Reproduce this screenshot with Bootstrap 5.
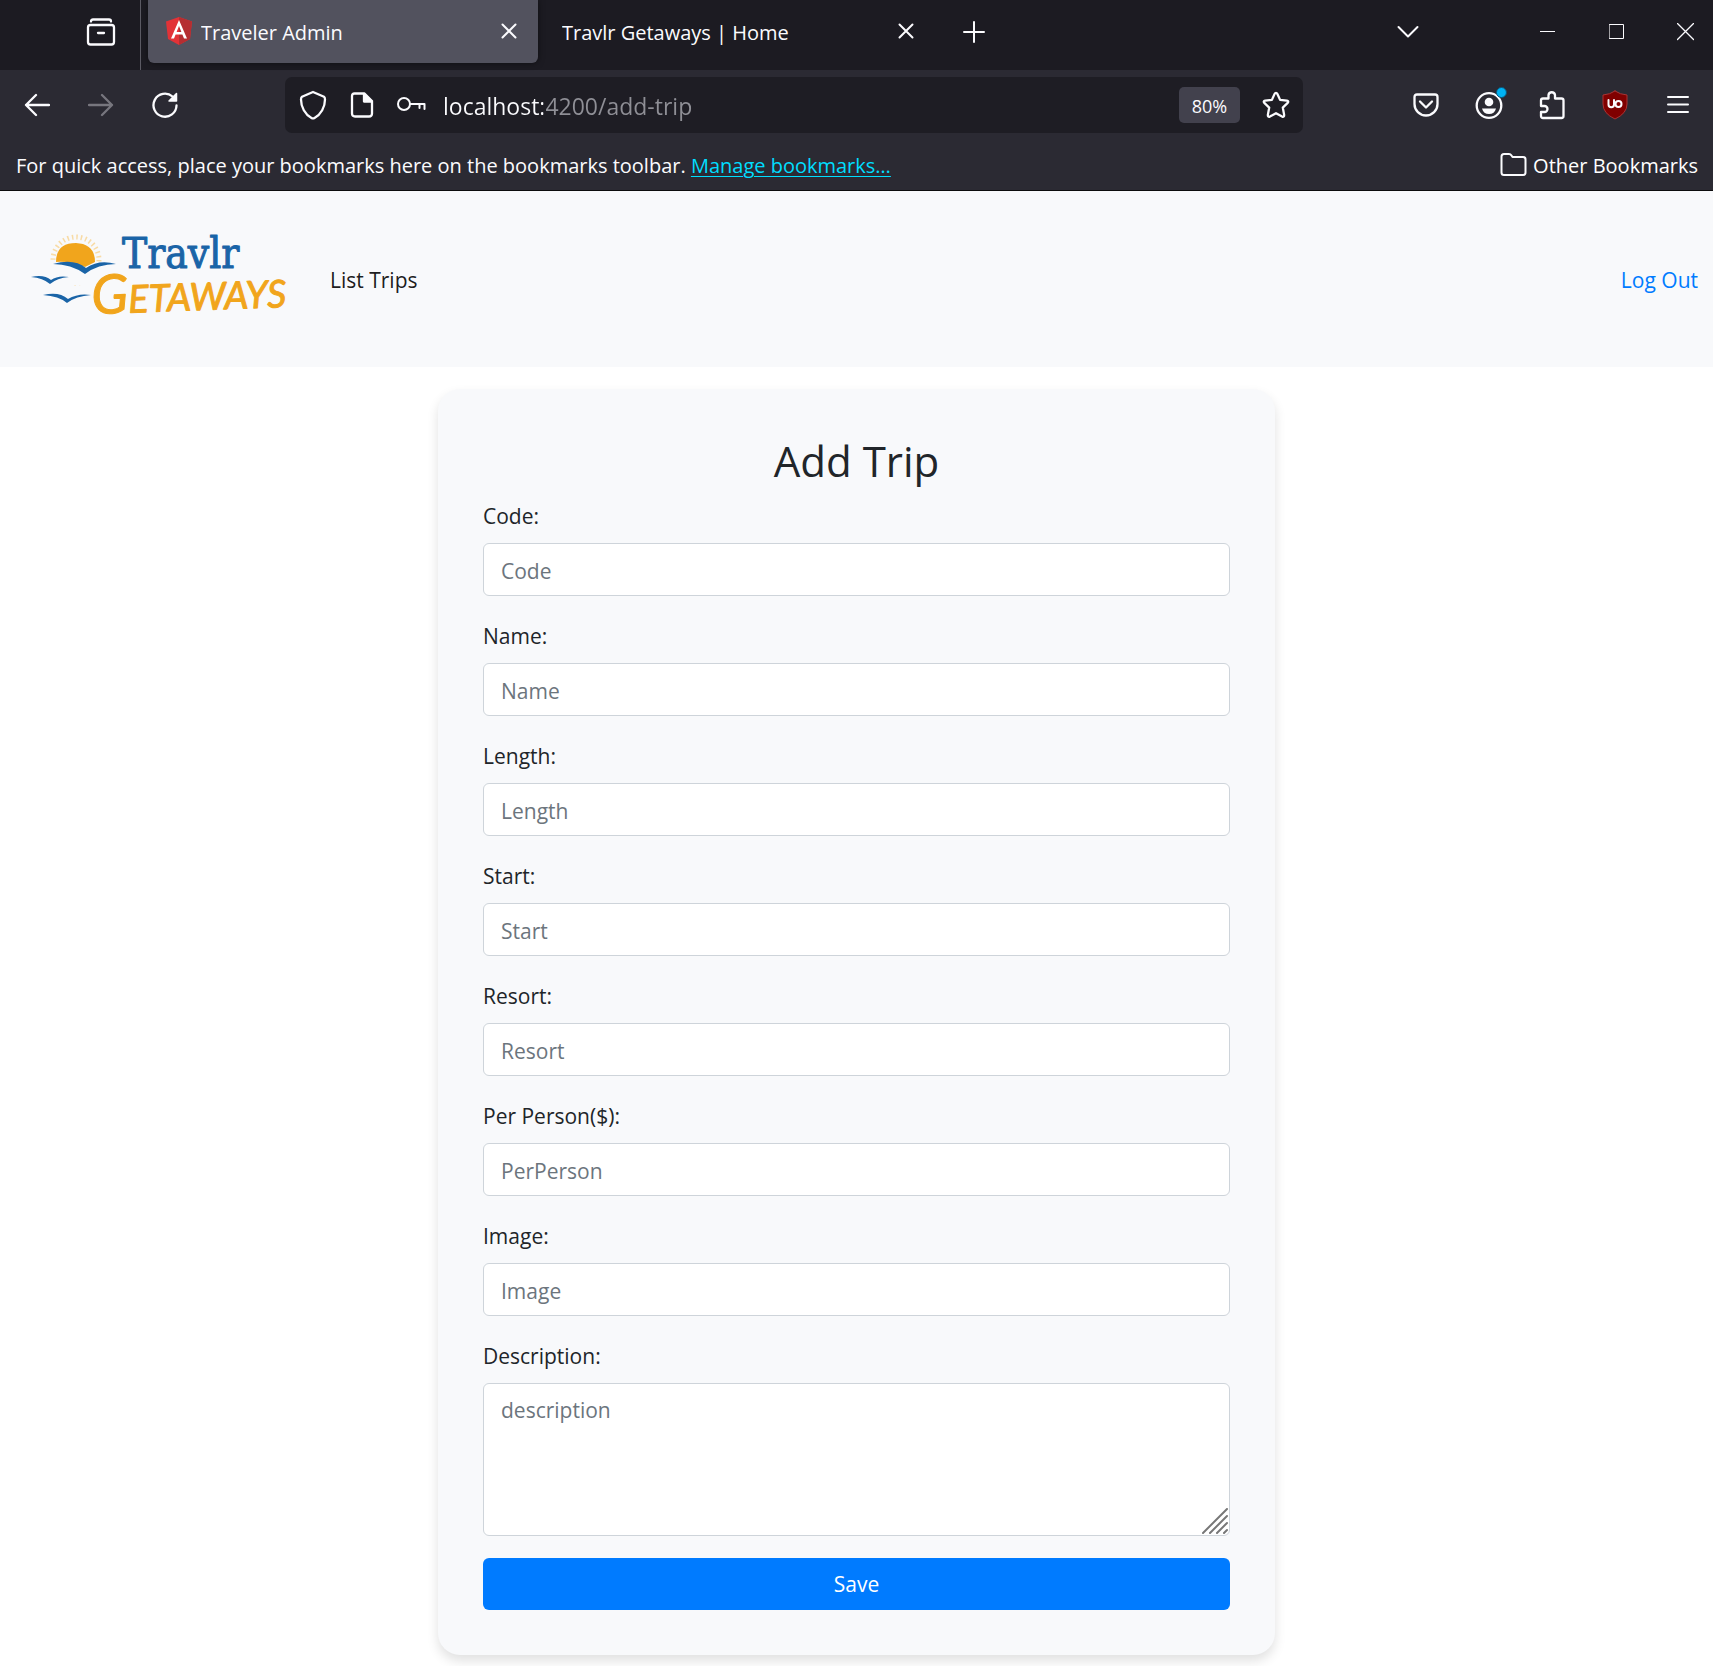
<!DOCTYPE html>
<html lang="en">
<head>
<meta charset="utf-8">
<meta name="viewport" content="width=device-width, initial-scale=1">
<title>Traveler Admin</title>
<link href="https://cdn.jsdelivr.net/npm/bootstrap@5.3.0/dist/css/bootstrap.min.css" rel="stylesheet">
<style>
  body { font-family: "Open Sans", "Noto Sans", sans-serif; font-size: 21px; line-height: 34px; color: #212529; background: #fff; }
  svg { display: block; flex: none; fill: none; stroke: #fbfbfe; stroke-width: 2; stroke-linecap: round; stroke-linejoin: round; }
  .stroke-thin { stroke-width: 1; }
  .stroke-bold { stroke-width: 2.3; }
  .stroke-dim { stroke: #77767e; }
  .tabstrip { height: 70px; background: #1c1b22; color: #fbfbfe; font-size: 20px; }
  .toolrow { height: 70px; background: #2b2a33; padding: 0 4px 0 5px; }
  .markrow { height: 51px; background: #2b2a33; color: #fbfbfe; border-bottom: 1px solid #0c0c0d; padding: 2px 15px 0 16px; font-size: 20px; }
  .markrow .manage { color: #00ddff; text-decoration: underline; text-underline-offset: 3px; text-decoration-thickness: 1px; }
  .other-marks { gap: 6px; font-size: 20px; line-height: 34px; }
  .icon-btn { display: flex; align-items: center; justify-content: center; width: 64px; height: 56px; padding: 0; border: 0; background: none; flex: none; }
  .icon-btn.slim { width: 49px; }
  .icon-btn.win { width: 55px; }
  .toolgroup .icon-btn { width: 63px; }
  .window-btns { gap: 14px; margin-left: 80px; }
  .archive-cell { width: 141px; height: 70px; padding: 0 0 6px 61px; border-right: 1px solid #5b5a63; margin-right: 7px; }
  .archive-cell .icon-btn { width: 80px; }
  .tab-item { width: 390px; height: 63px; padding: 0 8px 2px 17px; margin-right: 7px; }
  .tab-item.current { background: #52525e; border-radius: 0 0 6px 6px; box-shadow: 0 0 6px rgba(0,0,0,.5); }
  .tab-item .icon-btn { width: 43px; height: 44px; }
  .tab-name { padding-top: 4px; }
  .addressbar { height: 56px; margin: 0 91px 0 88px; padding: 0 3px; background: #1e1d24; border-radius: 7px; }
  .address-input { min-width: 0; height: 50px; padding: 2px 0 0; margin-left: 8px; border: 0; outline: 0; font-size: 23px;
    background: linear-gradient(to right, #fbfbfe 100px, #8f8f96 100px); -webkit-background-clip: text; background-clip: text; color: transparent; }
  .zoom-btn { width: 61px; height: 36px; margin-right: 11px; padding: 0; border: 0; border-radius: 5px; background: #42414d; color: #fbfbfe; font-size: 18px; line-height: 38px; }
  .site-header { height: 176px; padding: 0 15px 0 24px; background: #f8f9fb; }
  .site-header a { text-decoration: none; padding-top: 2px; }
  .site-header .brand-link { padding-top: 0; }
  .site-link { color: rgba(0,0,0,.9); margin-left: 38px; }
  .logout-link { color: #007bff; }
  .trip-card { max-width: 837px; margin: 22px auto 11px; padding: 45px; border-radius: 22px; background: #f8f9fb; box-shadow: 0 6px 12px rgba(0,0,0,.12); }
  .trip-title { font-size: 42px; line-height: 54px; margin-bottom: 11px; font-weight: 400; }
  .trip-field { margin-bottom: 23px; }
  .trip-field .form-label { display: block; margin-bottom: 10px; }
  .trip-field .form-control { height: 53px; padding: 9px 17px 7px; border: 1px solid #ced4da; border-radius: 6px; font-size: 21px; line-height: 34px; background: #fff; }
  .trip-field .form-control::placeholder { color: #6c757d; opacity: 1; }
  .trip-field.last { margin-bottom: 22px; }
  .trip-field textarea.form-control { height: 153px; resize: none; }
  .grip { position: absolute; right: 2px; bottom: 2px; stroke: #777; }
  .save-btn { height: 52px; padding: 2px 0 0; border: 0; border-radius: 6px; background: #007bff; color: #fff; font-size: 21px; }
</style>
</head>
<body>
<div class="tabstrip d-flex align-items-start">
  <div class="archive-cell d-flex align-items-center">
    <button class="icon-btn" type="button" aria-label="Recent browsing">
      <svg class="stroke-bold" width="30" height="30" viewBox="0 0 30 30"><path d="M5 4.500C5 3 6 2.500 7 2.500H23C24 2.500 25 3 25 4.500"/><rect x="2" y="8" width="26" height="19.500" rx="2.500"/><path d="M12 16H18"/></svg>
    </button>
  </div>
  <div class="tab-item current d-flex align-items-center">
    <svg width="28" height="30" viewBox="0 0 28 30"><path fill="#e23237" stroke="none" d="M14 1L27 5.500L25 23L14 29L3 23L1 5.500Z"/><path fill="#b52e31" stroke="none" d="M14 1L27 5.500L25 23L14 29Z"/><path fill="#fff" stroke="none" fill-rule="evenodd" d="M14 4L22 22.500H19L17.400 18.500H10.600L9 22.500H6ZM14 10L11.600 16H16.400Z"/></svg>
    <span class="tab-name flex-grow-1 ms-2 text-truncate">Traveler Admin</span>
    <button class="icon-btn" type="button" aria-label="Close tab"><svg width="16" height="16" viewBox="0 0 16 16"><path d="M1.500 1.500L14.500 14.500M14.500 1.500L1.500 14.500"/></svg></button>
  </div>
  <div class="tab-item d-flex align-items-center">
    <span class="tab-name flex-grow-1 text-truncate">Travlr Getaways | Home</span>
    <button class="icon-btn" type="button" aria-label="Close tab"><svg width="16" height="16" viewBox="0 0 16 16"><path d="M1.500 1.500L14.500 14.500M14.500 1.500L1.500 14.500"/></svg></button>
  </div>
  <div class="d-flex align-items-center flex-grow-1 pt-1">
    <button class="icon-btn" type="button" aria-label="New tab"><svg width="22" height="22" viewBox="0 0 22 22"><path d="M11 1V21M1 11H21"/></svg></button>
    <button class="icon-btn ms-auto" type="button" aria-label="List all tabs"><svg width="22" height="14" viewBox="0 0 22 14"><path d="M1.500 2L11 11.500L20.500 2"/></svg></button>
  </div>
  <div class="window-btns d-flex pt-1">
    <button class="icon-btn win" type="button" aria-label="Minimize"><svg class="stroke-thin" width="15" height="16" viewBox="0 0 15 16"><path d="M0 7.500H15"/></svg></button>
    <button class="icon-btn win" type="button" aria-label="Maximize"><svg class="stroke-thin" width="15" height="16" viewBox="0 0 15 16"><rect x=".5" y=".5" width="14" height="14"/></svg></button>
    <button class="icon-btn win" type="button" aria-label="Close window"><svg class="stroke-thin" width="17" height="18" viewBox="0 0 17 18"><path d="M.5 .5L16.500 16.500M16.500 .5L.5 16.500" stroke-width="1.300"/></svg></button>
  </div>
</div>

<div class="toolrow d-flex align-items-center">
  <button class="icon-btn" type="button" aria-label="Back"><svg class="stroke-bold" width="26" height="24" viewBox="0 0 26 24"><path d="M12 2L2 12L12 22M2 12H25"/></svg></button>
  <button class="icon-btn" type="button" aria-label="Forward"><svg class="stroke-bold stroke-dim" width="26" height="24" viewBox="0 0 26 24"><path d="M14 2L24 12L14 22M24 12H1"/></svg></button>
  <button class="icon-btn" type="button" aria-label="Reload"><svg class="stroke-bold" width="26" height="26" viewBox="0 0 26 26"><path d="M24.500 13.500A11.500 11.500 0 1 1 20.500 4.500"/><path d="M24.500 1.500V9H17Z" fill="#fbfbfe" stroke-width="1.500"/></svg></button>
  <div class="addressbar d-flex align-items-center flex-grow-1">
    <button class="icon-btn slim" type="button" aria-label="Tracking protection"><svg class="stroke-bold" width="28" height="30" viewBox="0 0 28 30"><path d="M14 2L25 6.800C26 7.500 26 8.500 26 9.500C26 17 22 24.500 15.500 28Q14 28.800 12.500 28C6 24.500 2 17 2 9.500C2 8.500 2 7.500 3 6.800Z"/></svg></button>
    <button class="icon-btn slim" type="button" aria-label="Site information"><svg class="stroke-bold" width="24" height="26" viewBox="0 0 24 26"><path d="M4.500 1.500H14.500L22 9V21.500Q22 24.500 19 24.500H5Q2 24.500 2 21.500V4Q2 1.500 4.500 1.500Z"/><path d="M14 2V9.500H21.500Z" fill="#fbfbfe"/></svg></button>
    <button class="icon-btn slim" type="button" aria-label="Saved logins"><svg width="30" height="18" viewBox="0 0 30 18"><circle cx="8" cy="8" r="6"/><path d="M14 8H28.500V13M23.500 8V12"/></svg></button>
    <input class="address-input flex-grow-1" type="text" aria-label="Address" value="localhost:4200/add-trip">
    <button class="zoom-btn" type="button">80%</button>
    <button class="icon-btn slim" type="button" aria-label="Bookmark this page"><svg class="stroke-bold" width="28" height="28" viewBox="0 0 28 28"><path d="M14 1.800Q14.900 1.800 15.400 2.900L18.100 8.900L24.900 9.700Q27 10.200 25.700 11.900L20.800 16.600L22.100 23.600Q22.400 26.300 20.100 25.600L14 22.200L7.900 25.600Q5.600 26.300 5.900 23.600L7.200 16.600L2.300 11.900Q1 10.200 3.100 9.700L9.900 8.900L12.600 2.900Q13.100 1.800 14 1.800Z"/></svg></button>
  </div>
  <div class="toolgroup d-flex">
    <button class="icon-btn" type="button" aria-label="Save to Pocket"><svg class="stroke-bold" width="26" height="24" viewBox="0 0 26 24"><path d="M4 1.500H22Q24.500 1.500 24.500 4V11A11.500 11.500 0 0 1 1.500 11V4Q1.500 1.500 4 1.500Z"/><path d="M7 8.500L13 14.500L19 8.500"/></svg></button>
    <button class="icon-btn" type="button" aria-label="Account"><svg class="stroke-bold" width="36" height="36" viewBox="0 0 36 36"><circle cx="18" cy="18.500" r="12.300"/><circle cx="18" cy="15" r="4.300" fill="#fbfbfe" stroke="none"/><path d="M11 21.500H25Q23.500 27 18 27T11 21.500Z" fill="#fbfbfe" stroke="none"/><circle cx="30.500" cy="5.500" r="5" fill="#00b3f4" stroke="#0b5577" stroke-width="1"/></svg></button>
    <button class="icon-btn" type="button" aria-label="Extensions"><svg class="stroke-bold" width="26" height="30" viewBox="0 0 26 30"><path d="M2 16V10.500Q2 8.500 4 8.500H9.500V5A3.300 3.300 0 0 1 16 5V8.500H22.500Q24.500 8.500 24.500 10.500V26Q24.500 28 22.500 28H4Q2 28 2 26V22H5.500A3 3 0 0 0 5.500 16Z"/></svg></button>
    <button class="icon-btn" type="button" aria-label="uBlock Origin"><svg width="26" height="30" viewBox="0 0 26 30"><path d="M13 1Q18 4.500 25 5V14Q25 23.500 13 29Q1 23.500 1 14V5Q8 4.500 13 1Z" fill="#800000" stroke="#a33" stroke-width="1"/><path d="M6.500 10V14.500A2.500 2.500 0 0 0 12 14.500V10"/><circle cx="16.500" cy="14" r="3"/></svg></button>
    <button class="icon-btn" type="button" aria-label="Menu"><svg width="22" height="20" viewBox="0 0 22 20"><path d="M1 2H21M1 9.500H21M1 17H21"/></svg></button>
  </div>
</div>

<div class="markrow d-flex align-items-center justify-content-between">
  <div>For quick access, place your bookmarks here on the bookmarks toolbar. <a class="manage" href="#">Manage bookmarks…</a></div>
  <button class="other-marks btn p-0 border-0 d-flex align-items-center text-white rounded-0" type="button">
    <svg width="27" height="28" viewBox="0 0 27 28"><path d="M4 2H9Q10.500 2 11.500 3.500L12.500 5H23Q25.500 5 25.500 7.500V20.500Q25.500 23 23 23H4Q1.500 23 1.500 20.500V4.500Q1.500 2 4 2Z"/></svg>
    Other Bookmarks
  </button>
</div>

<header class="site-header d-flex align-items-center">
  <a class="brand-link" href="#" aria-label="Travlr Getaways">
    <svg width="268" height="100" viewBox="24 229 268 100">
      <circle cx="76" cy="260" r="23" stroke="#f8dba5" stroke-width="5" stroke-dasharray="1.500 3" stroke-linecap="butt"/>
      <path d="M50 262H102V285H50Z" fill="#f8f9fb" stroke="none"/>
      <path d="M56 262Q56 243 76 243Q95 244 95 262L85 267Q72 261 56 262Z" fill="#f1a51c" stroke="none"/>
      <path d="M53 264Q74 258 86 268Q99 259 116 264Q98 264 85 274Q71 264 53 264Z" fill="#1a64a7" stroke="none"/>
      <path d="M31 277Q44 274 51 280Q58 275 69 277Q57 278 50 284Q43 278 31 277Z" fill="#1a64a7" stroke="none"/>
      <path d="M43 295Q59 291 68 299Q78 293 91 295Q76 296 67 303Q59 296 43 295Z" fill="#1a64a7" stroke="none"/>
      <text x="122" y="268" font-family="DejaVu Serif Condensed, DejaVu Serif, serif" font-size="42" fill="#1a64a7" stroke="#1a64a7" stroke-width="1">Travlr</text>
      <text x="92" y="314" transform="rotate(-2 92 314)" font-family="Lato, sans-serif" font-style="italic" font-weight="400" font-size="54" fill="#f1a51c" stroke="#f1a51c" stroke-width="1">G<tspan font-size="38">ETAWAYS</tspan></text>
    </svg>
  </a>
  <a class="site-link" href="#">List Trips</a>
  <a class="logout-link ms-auto" href="#">Log Out</a>
</header>

<main>
  <form class="trip-card">
    <h2 class="trip-title text-center">Add Trip</h2>
    <div class="trip-field"><label class="form-label" for="code">Code:</label><input class="form-control" id="code" type="text" placeholder="Code"></div>
    <div class="trip-field"><label class="form-label" for="name">Name:</label><input class="form-control" id="name" type="text" placeholder="Name"></div>
    <div class="trip-field"><label class="form-label" for="length">Length:</label><input class="form-control" id="length" type="text" placeholder="Length"></div>
    <div class="trip-field"><label class="form-label" for="start">Start:</label><input class="form-control" id="start" type="text" placeholder="Start"></div>
    <div class="trip-field"><label class="form-label" for="resort">Resort:</label><input class="form-control" id="resort" type="text" placeholder="Resort"></div>
    <div class="trip-field"><label class="form-label" for="perPerson">Per Person($):</label><input class="form-control" id="perPerson" type="text" placeholder="PerPerson"></div>
    <div class="trip-field"><label class="form-label" for="image">Image:</label><input class="form-control" id="image" type="text" placeholder="Image"></div>
    <div class="trip-field last">
      <label class="form-label" for="description">Description:</label>
      <div class="position-relative">
        <textarea class="form-control" id="description" placeholder="description"></textarea>
        <svg class="grip" width="26" height="26" viewBox="0 0 26 26"><path d="M1 25L25 1M8 25L25 8M15 25L25 15M22 25L25 22"/></svg>
      </div>
    </div>
    <button class="save-btn btn w-100" type="submit">Save</button>
  </form>
</main>
<script src="https://cdn.jsdelivr.net/npm/bootstrap@5.3.0/dist/js/bootstrap.bundle.min.js"></script>
</body>
</html>
